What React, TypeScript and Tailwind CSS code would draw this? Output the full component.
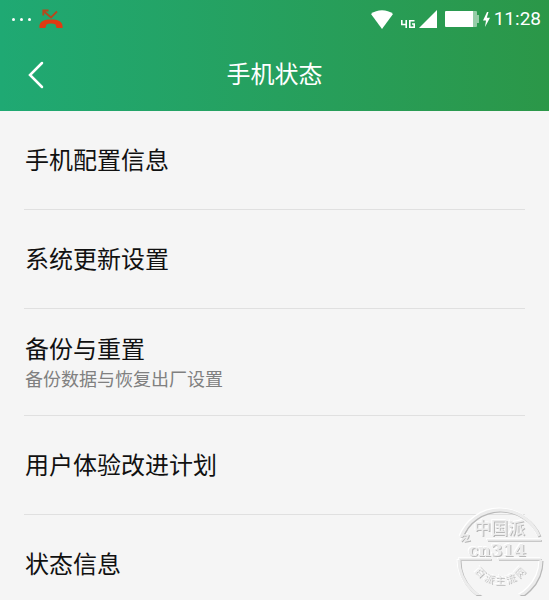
import React from 'react';

interface SettingItem {
  id: string;
  title: string;
  description?: string;
}

const items: SettingItem[] = [
  { id: 'config', title: '手机配置信息' },
  { id: 'update', title: '系统更新设置' },
  { id: 'backup', title: '备份与重置', description: '备份数据与恢复出厂设置' },
  { id: 'experience', title: '用户体验改进计划' },
  { id: 'status', title: '状态信息' },
];

const MissedCallIcon = () => (
  <svg viewBox="0 0 24 20" className="w-6 h-5" aria-label="未接来电">
    <path d="M4.500 2 L12 8.500 L18 2.500 M4.300 6.500 V1.500 H9.500" fill="none" stroke="#b8481c" strokeWidth="1.800" />
    <path
      d="M0.500 19 C-0.500 12.500 5 10.500 12 10.500 C19 10.500 24.500 12.500 23.500 19 L17.800 19 C17.200 18.500 17 17 16.500 15.500 C14 14.300 10 14.300 7.500 15.500 C7 17 6.800 18.500 6.200 19 Z"
      fill="#e03a12"
    />
  </svg>
);

const WifiIcon = () => (
  <svg viewBox="0 0 22 19" className="w-[22px] h-[19px]" aria-label="Wi-Fi">
    <path d="M0 4 C6 -1 16 -1 22 4 L11 19 Z" fill="#fff" />
  </svg>
);

const NetworkIcon = () => (
  <svg viewBox="0 0 14 8" className="w-[14px] h-2" aria-label="4G">
    <path d="M0.800 0 V4.500 H6 M5.200 0 V8 M13.500 0.800 H8.800 V7.200 H13.200 V4 H11" fill="none" stroke="#fff" strokeWidth="1.600" />
  </svg>
);

const SignalIcon = () => (
  <svg viewBox="0 0 18 18" className="w-[18px] h-[18px]" aria-label="信号">
    <path d="M18 0 V18 H0 Z" fill="#fff" />
  </svg>
);

const BatteryIcon = () => (
  <svg viewBox="0 0 34 16" className="w-[34px] h-4" aria-label="电量">
    <path d="M28 0 H31 Q32 0 32 1 V4 H34 V12 H32 V15 Q32 16 31 16 H28 Z" fill="#fff" opacity="0.500" />
    <path d="M1 0 H28 V16 H1 Q0 16 0 15 V1 Q0 0 1 0 Z" fill="#fff" />
  </svg>
);

const ChargingIcon = () => (
  <svg viewBox="0 0 7 15" className="w-[7px] h-[15px]" aria-label="充电中">
    <path d="M4 0 L0 8.500 H3 L2 15 L7 5.800 H3.800 L5.500 0 Z" fill="#fff" />
  </svg>
);

// Embossed site stamp, pinned to the corner of the window
const Stamp = () => (
  <svg
    viewBox="0 0 88 88"
    className="fixed right-[5px] bottom-[5px] w-[88px] h-[88px] pointer-events-none text-[#ececec] [filter:drop-shadow(1px_1px_0_#b8b8b8)_drop-shadow(-1px_-1px_0_#ffffff)]"
  >
    <defs>
      <path id="stamp-arc" d="M13 54 A31 31 0 0 0 73 54" />
    </defs>
    <g fill="none" stroke="currentColor">
      <path d="M4 30 A42 42 0 0 1 82 29" strokeWidth="3" />
      <path d="M2 53 A41 41 0 0 0 84 53" strokeWidth="3" />
      <path d="M30 33 H84 M2 52 H34 M41 52 H84" strokeWidth="1.500" />
      <path d="M9 22 L5 28 H12 M8 30 L4 34 M11 29 L8 34 L13 33" strokeWidth="1.500" />
    </g>
    <text x="17" y="27" fontSize="17" fontWeight="500" fill="currentColor">
      中国派
    </text>
    <text x="11" y="49" fontSize="17" fontWeight="700" fill="currentColor" className="font-['DejaVu_Serif',serif]">
      cn314
    </text>
    <text fontSize="10" fill="currentColor">
      <textPath href="#stamp-arc" startOffset="50%" textAnchor="middle">
        百 派 主 流 网
      </textPath>
    </text>
  </svg>
);

export default function App() {
  return (
    <div className="min-h-screen bg-[#f5f5f5] border-r border-white font-['Roboto','Noto_Sans_CJK_SC',sans-serif]">
      <header className="bg-linear-to-r from-[#1fa973] to-[#2b9748] text-white">
        {/* Status bar */}
        <div className="flex items-center justify-between h-[38px] pl-3 pr-2">
          <div className="flex items-center gap-2">
            <div className="flex gap-[5px]">
              <span className="w-[3px] h-[3px] rounded-full bg-white" />
              <span className="w-[3px] h-[3px] rounded-full bg-white" />
              <span className="w-[3px] h-[3px] rounded-full bg-white" />
            </div>
            <MissedCallIcon />
          </div>
          <div className="flex items-center gap-2">
            <WifiIcon />
            <div className="flex items-end gap-1">
              <NetworkIcon />
              <SignalIcon />
            </div>
            <BatteryIcon />
            <div className="flex items-center gap-1 -ml-1">
              <ChargingIcon />
              <span className="text-[19px] leading-6">11:28</span>
            </div>
          </div>
        </div>

        {/* Title bar */}
        <div className="grid grid-cols-[48px_1fr_48px] items-center h-[73px] pt-px">
          <button type="button" aria-label="返回" className="flex items-center justify-end h-12 pr-1 cursor-pointer">
            <svg viewBox="0 0 16 28" className="w-4 h-7">
              <path d="M14 2 L2 14 L14 26" fill="none" stroke="#fff" strokeWidth="2.500" strokeLinecap="round" />
            </svg>
          </button>
          <h1 className="text-center text-2xl font-normal">手机状态</h1>
        </div>
      </header>

      <ul className="px-6">
        {items.map((item) => (
          <li key={item.id} className="border-b border-[#e0e0e0] last:border-b-0">
            <button
              type="button"
              className={`flex flex-col justify-center w-full pl-px text-left cursor-pointer ${
                item.description ? 'h-[106px] pt-1' : 'h-[98px] pt-0.5'
              }`}
            >
              <span className="text-2xl text-[#111]">{item.title}</span>
              {item.description && <span className="text-lg leading-7 text-[#808080]">{item.description}</span>}
            </button>
          </li>
        ))}
      </ul>

      <Stamp />
    </div>
  );
}
